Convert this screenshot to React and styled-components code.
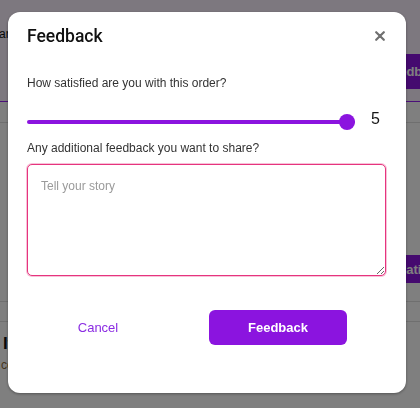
import React, { useState } from "react";
import styled, { createGlobalStyle } from "styled-components";

const GlobalStyle = createGlobalStyle`
  html, body {
    margin: 0;
    padding: 0;
    height: 100%;
    overflow: hidden;
  }
  body {
    font-family: "Liberation Sans", Arial, sans-serif;
    background: #ffffff;
  }
`;

const PURPLE = "#8b14df";
const FONT = `"Liberation Sans", Arial, sans-serif`;

const App = () => {
  const [rating, setRating] = useState(5);
  const [story, setStory] = useState("");

  return (
    <>
      <GlobalStyle />
      <Page>
        <TopBar>
          <Crumb>Calendar</Crumb>
          <ActionRow>
            <GhostAction $width={138} $height={35} $shift={-63}>
              Feedback
            </GhostAction>
          </ActionRow>
        </TopBar>
        <TabRow />
        <ContentArea>
          <ActionRow>
            <GhostAction $width={100} $height={28} $shift={-47}>
              Rating
            </GhostAction>
          </ActionRow>
          <Divider $top={18} />
          <Divider $top={19} />
          <ItemTitle>Item</ItemTitle>
          <ItemMeta>cost</ItemMeta>
        </ContentArea>
      </Page>

      <Overlay>
        <Modal>
          <ModalHeader>
            <Title>Feedback</Title>
            <CloseButton aria-label="close">
              <svg width="10" height="10" viewBox="0 0 10 10">
                <path
                  d="M1.2 1.2 L8.8 8.8 M8.8 1.2 L1.2 8.8"
                  stroke="#707070"
                  strokeWidth="2.2"
                  strokeLinecap="round"
                />
              </svg>
            </CloseButton>
          </ModalHeader>

          <Label $mt={26}>How satisfied are you with this order?</Label>
          <SliderRow>
            <Range
              type="range"
              min="1"
              max="5"
              value={rating}
              onChange={(e) => setRating(Number(e.target.value))}
            />
            <RangeValue>{rating}</RangeValue>
          </SliderRow>

          <Label $mt={9}>Any additional feedback you want to share?</Label>
          <StoryInput
            placeholder="Tell your story"
            value={story}
            onChange={(e) => setStory(e.target.value)}
          />

          <Footer>
            <CancelButton>Cancel</CancelButton>
            <SubmitButton>Feedback</SubmitButton>
          </Footer>
        </Modal>
      </Overlay>
    </>
  );
};

export default App;

const Page = styled.div`
  width: 100%;
  height: 408px;
  overflow: hidden;
  background: #ffffff;
`;

const TopBar = styled.div`
  height: 102px;
  background: #faf0ff;
  border-bottom: 1px solid #9620f2;
  box-sizing: border-box;
  padding-top: 27px;
`;

const Crumb = styled.div`
  font-size: 12px;
  line-height: 14px;
  color: #111;
  margin-left: -39px;
`;

const ActionRow = styled.div`
  display: flex;
  justify-content: flex-end;
  margin-top: 13px;
`;

const GhostAction = styled.div`
  width: ${(p) => p.$width}px;
  height: ${(p) => p.$height}px;
  flex-shrink: 0;
  margin-right: ${(p) => p.$shift}px;
  background: ${PURPLE};
  color: #fff;
  font-weight: 700;
  font-size: 13px;
  display: flex;
  align-items: center;
  justify-content: center;
  border-radius: 4px;
`;

const TabRow = styled.div`
  height: 20px;
  border-bottom: 1px solid #dedede;
`;

const ContentArea = styled.div`
  padding-top: 132px;
  ${ActionRow} {
    margin-top: 0;
  }
`;

const Divider = styled.div`
  margin-top: ${(p) => p.$top}px;
  border-bottom: 1px solid #dedede;
`;

const ItemTitle = styled.div`
  margin-top: 12px;
  padding-left: 3px;
  font-size: 17px;
  font-weight: 700;
  color: #111;
`;

const ItemMeta = styled.div`
  margin-top: 4px;
  padding-left: 1px;
  font-size: 12px;
  color: #8a6a3a;
`;

const Overlay = styled.div`
  position: fixed;
  inset: 0;
  background: rgba(0, 0, 0, 0.5);
  display: flex;
  align-items: flex-start;
  padding: 12px 14px 0 8px;
`;

const Modal = styled.div`
  width: 398px;
  box-sizing: border-box;
  background: #ffffff;
  border-radius: 12px;
  padding: 12px 20px 48px 19px;
  box-shadow: 0 1px 3px rgba(0, 0, 0, 0.35);
  display: flex;
  flex-direction: column;
`;

const ModalHeader = styled.div`
  display: flex;
  align-items: center;
  justify-content: space-between;
  height: 24px;
`;

const Title = styled.h2`
  margin: 0;
  font-family: Roboto, "Liberation Sans", sans-serif;
  font-size: 17.5px;
  line-height: 24px;
  font-weight: 500;
  color: #111111;
`;

const CloseButton = styled.button`
  border: 0;
  background: none;
  padding: 0;
  width: 11px;
  height: 11px;
  display: flex;
  align-items: center;
  justify-content: center;
  margin-right: 1px;
  cursor: pointer;
`;

const Label = styled.div`
  margin-top: ${(p) => p.$mt}px;
  font-size: 12px;
  line-height: 18px;
  color: #333333;
`;

const SliderRow = styled.div`
  display: flex;
  align-items: center;
  gap: 16px;
  margin-top: 22px;
  height: 16px;
`;

const Range = styled.input`
  flex: 1;
  margin: 0;
  height: 16px;
  -webkit-appearance: none;
  appearance: none;
  background: transparent;

  &::-webkit-slider-runnable-track {
    height: 4px;
    background: ${PURPLE};
    border-radius: 2px;
  }

  &::-webkit-slider-thumb {
    -webkit-appearance: none;
    appearance: none;
    width: 16px;
    height: 16px;
    border-radius: 50%;
    background: ${PURPLE};
    margin-top: -6px;
  }
`;

const RangeValue = styled.span`
  width: 15px;
  font-size: 16px;
  line-height: 16px;
  color: #161616;
  margin-bottom: 7px;
`;

const StoryInput = styled.textarea`
  margin-top: 7px;
  height: 112px;
  box-sizing: border-box;
  border: 1px solid #e6347e;
  box-shadow: 0 0 0 1px rgba(230, 52, 126, 0.3);
  border-radius: 5px;
  padding: 12px 13px;
  font-family: ${FONT};
  font-size: 12px;
  line-height: 18px;
  color: #222;
  outline: none;

  &::placeholder {
    color: #9a9a9a;
  }
`;

const Footer = styled.div`
  display: flex;
  gap: 42px;
  margin-top: 34px;
  padding-left: 2px;
`;

const CancelButton = styled.button`
  width: 138px;
  height: 35px;
  border: 0;
  background: none;
  font-family: ${FONT};
  font-size: 13px;
  color: #8a2be2;
  cursor: pointer;
`;

const SubmitButton = styled.button`
  width: 138px;
  height: 35px;
  border: 0;
  border-radius: 6px;
  background: ${PURPLE};
  color: #ffffff;
  font-family: ${FONT};
  font-size: 13px;
  font-weight: 700;
  cursor: pointer;
`;
